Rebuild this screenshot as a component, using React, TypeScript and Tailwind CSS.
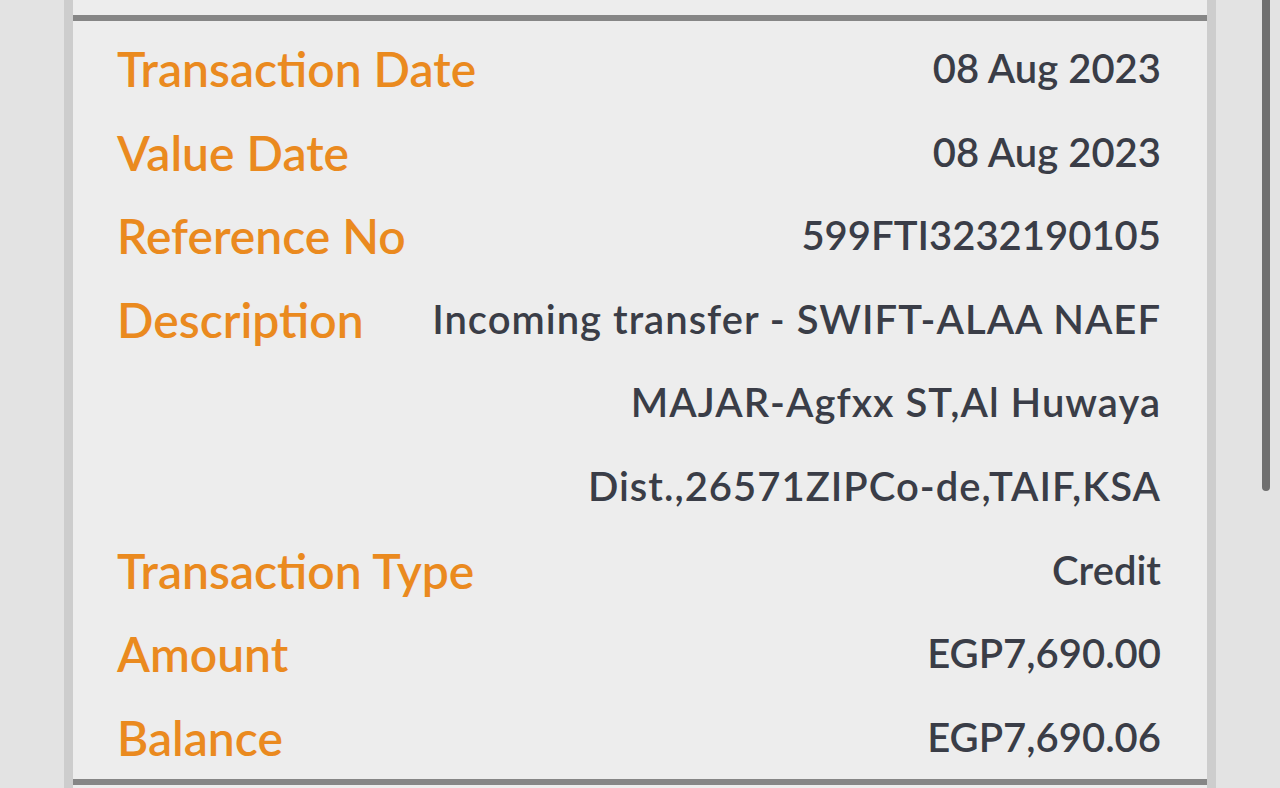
import React from 'react';

const rows: { label: string; value: string[]; wide?: boolean }[] = [
  { label: 'Transaction Date', value: ['08 Aug 2023'] },
  { label: 'Value Date', value: ['08 Aug 2023'] },
  { label: 'Reference No', value: ['599FTI3232190105'] },
  {
    label: 'Description',
    value: [
      'Incoming transfer - SWIFT-ALAA NAEF',
      'MAJAR-Agfxx ST,Al Huwaya',
      'Dist.,26571ZIPCo-de,TAIF,KSA',
    ],
    wide: true,
  },
  { label: 'Transaction Type', value: ['Credit'] },
  { label: 'Amount', value: ['EGP7,690.00'] },
  { label: 'Balance', value: ['EGP7,690.06'] },
];

export default function App() {
  return (
    <div
      className="flex h-[788px] w-full overflow-hidden bg-[#e3e3e3]"
      style={{ fontFamily: 'Lato, "Open Sans", sans-serif' }}
    >
      <div className="w-[64px] shrink-0" />
      <div className="w-[9px] shrink-0 bg-[#cdcdcd]" />

      <div className="w-[1134px] shrink-0 bg-[#ededed] pt-[15px]">
        <div className="h-[6px] bg-[#868686]" />
        <div className="pl-[44px] pr-[46px] pt-[6px] leading-[83.6px] font-semibold">
          {rows.map((row) => (
            <div key={row.label} className="flex justify-between gap-[60px]">
              <div className="shrink-0 whitespace-nowrap text-[48px] text-[#ea8a1f]">{row.label}</div>
              <div
                className={
                  row.wide
                    ? 'text-right text-[40px] tracking-[1px] text-[#3a3d47]'
                    : 'text-right text-[40px] text-[#3a3d47]'
                }
              >
                {row.value.map((line) => (
                  <div key={line} className="whitespace-nowrap">
                    {line}
                  </div>
                ))}
              </div>
            </div>
          ))}
        </div>
        <div className="h-[6px] bg-[#868686]" />
      </div>

      <div className="w-[9px] shrink-0 bg-[#cdcdcd]" />
      <div className="relative flex-1">
        <div className="absolute left-[46px] top-0 h-[491px] w-[8px] rounded-b-full bg-[#6f6f6f]" />
      </div>
    </div>
  );
}
